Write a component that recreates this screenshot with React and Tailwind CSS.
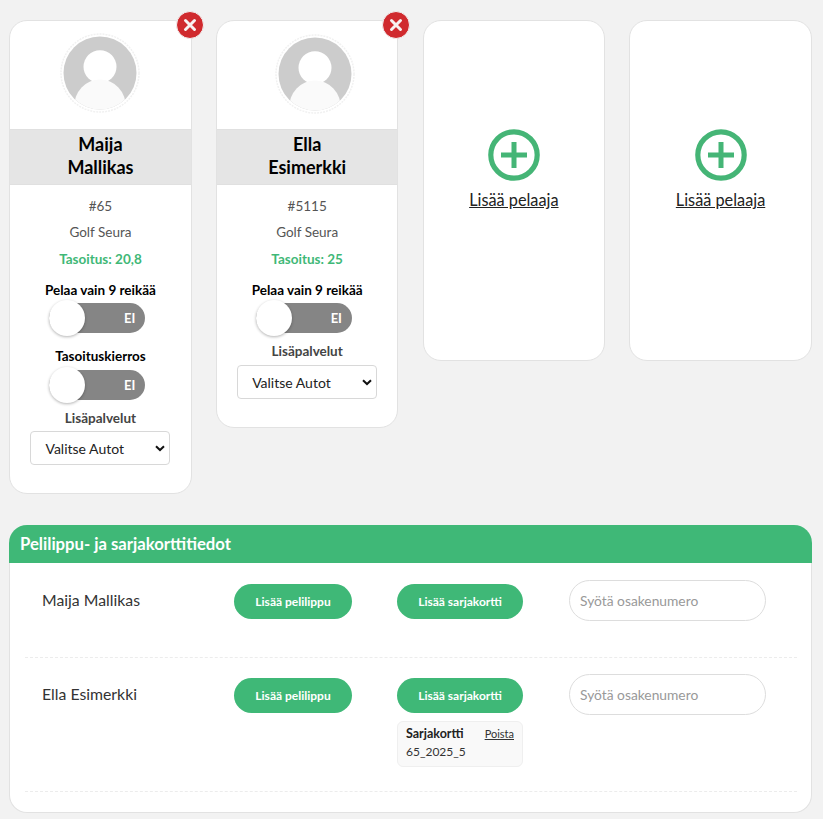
function Avatar({ id }) {
  return (
    <svg width="80" height="80" viewBox="0 0 80 80" className="block">
      <circle cx="40" cy="40" r="39" fill="#ffffff" stroke="#f1f1f1" strokeWidth="1.5" strokeDasharray="2 1" />
      <circle cx="40" cy="40" r="36.5" fill="#cccccc" />
      <clipPath id={id}>
        <circle cx="40" cy="40" r="36.5" />
      </clipPath>
      <circle cx="40" cy="33.7" r="16.5" fill="#ffffff" />
      <ellipse cx="40" cy="74" rx="26" ry="27.5" fill="#fafafa" clipPath={"url(#" + id + ")"} />
    </svg>
  );
}

function CloseBadge({ className }) {
  return (
    <span className={"absolute flex h-[28px] w-[28px] items-center justify-center rounded-full border border-[#f2f2f2] bg-[#d02a2e] " + className}>
      <svg width="14" height="14" viewBox="0 0 14 14">
        <path d="M2.5 2.5 L11.5 11.5 M11.5 2.5 L2.5 11.5" stroke="#f8f2f2" strokeWidth="3" strokeLinecap="round" />
      </svg>
    </span>
  );
}

function Toggle() {
  return (
    <div className="relative ml-[39px] h-[30px] w-[96px] rounded-full bg-[#858585]">
      <span className="absolute right-[10px] top-[6px] text-[13px] font-bold leading-[18px] text-white">EI</span>
      <span className="absolute -top-[3px] left-0 h-[36px] w-[36px] rounded-full bg-white shadow-[0_1px_3px_rgba(0,0,0,0.3)]" />
    </div>
  );
}

function Select({ className }) {
  return (
    <div className={"relative mx-auto flex h-[34px] w-[140px] items-center rounded-[4px] border border-[#d8d8d8] bg-white pl-[14px] text-[14px] text-[#222222] " + className}>
      Valitse Autot
      <svg className="absolute right-[4px] top-[13px]" width="10" height="7" viewBox="0 0 10 7">
        <path d="M1 1.2 L5 5 L9 1.2" fill="none" stroke="#111111" strokeWidth="2" />
      </svg>
    </div>
  );
}

function PlayerCard({ id, first, last, num, hcp, extra, height, closeClass, avatarClass }) {
  return (
    <div className={"relative rounded-[18px] border border-[#e2e2e2] bg-white " + height}>
      <CloseBadge className={closeClass} />
      <div className={"flex h-[108px] items-start justify-center " + avatarClass}>
        <Avatar id={id} />
      </div>
      <div className="border-y border-[#e0e0e0] bg-[#e5e5e5] pb-[5px] pt-[3px] text-center text-[18px] font-bold leading-[23px] text-black">
        {first}
        <br />
        {last}
      </div>
      <div className="pt-[11px] text-center text-[13.5px] leading-[20px] text-[#555555]">
        <p>#{num}</p>
        <p className="mt-[6px]">Golf Seura</p>
        <p className="mt-[7px] font-bold text-[#3fb877]">{hcp}</p>
      </div>
      <p className="mt-[11px] text-center text-[13.5px] font-bold leading-[20px] text-black">Pelaa vain 9 reikää</p>
      <div className="mt-[3px]">
        <Toggle />
      </div>
      {extra && (
        <>
          <p className="mt-[13px] text-center text-[13.5px] font-bold leading-[20px] text-black">Tasoituskierros</p>
          <div className="mt-[4px]">
            <Toggle />
          </div>
        </>
      )}
      <p className="mt-[8px] text-center text-[13.5px] font-bold leading-[20px] text-[#444444]">Lisäpalvelut</p>
      <Select className={extra ? "mt-[3px]" : "mt-[4px]"} />
    </div>
  );
}

function AddCard() {
  return (
    <div className="flex h-[341px] flex-col items-center rounded-[18px] border border-[#e2e2e2] bg-white pt-[108px]">
      <svg width="52" height="52" viewBox="0 0 52 52">
        <circle cx="26" cy="26" r="23.2" fill="none" stroke="#45b576" strokeWidth="5.2" />
        <path d="M26 13 V39 M13 26 H39" stroke="#45b576" strokeWidth="5" />
      </svg>
      <span className="mt-[7px] text-[16.3px] leading-[24px] text-[#222222] underline">Lisää pelaaja</span>
    </div>
  );
}

function Btn({ children, w }) {
  return (
    <div className={"flex h-[35px] items-center justify-center rounded-full bg-[#3fb877] text-[12px] font-bold text-white " + w}>
      {children}
    </div>
  );
}

function Row({ name, card, height }) {
  return (
    <div className={"ml-[15px] mr-[14px] flex border-b border-dashed border-[#ececec] pl-[17px] " + height}>
      <div className="w-[192px] pt-[24px] text-[15.8px] leading-[24px] text-[#333333]">{name}</div>
      <div className="w-[163px] pt-[20px]">
        <Btn w="w-[118px]">Lisää pelilippu</Btn>
      </div>
      <div className="w-[172px] pt-[20px]">
        <Btn w="w-[126px]">Lisää sarjakortti</Btn>
        {card && (
          <div className="mt-[8px] h-[46px] w-[126px] rounded-[6px] border border-[#efefef] bg-[#f9f9f9] px-[8px] pt-[3px] text-[12px] leading-[18px] text-[#333333]">
            <div className="flex items-center justify-between">
              <span className="text-[12.5px] font-bold text-[#222222]">Sarjakortti</span>
              <span className="text-[11px] underline">Poista</span>
            </div>
            <div>65_2025_5</div>
          </div>
        )}
      </div>
      <div className="pt-[16px]">
        <div className="flex h-[41px] w-[197px] items-center rounded-full border border-[#dddddd] bg-white pl-[10px] pt-px text-[13.8px] text-[#999999]">
          Syötä osakenumero
        </div>
      </div>
    </div>
  );
}

export default function App() {
  return (
    <div className="min-h-[819px] bg-[#f2f2f2] pl-[9px] pr-[11px] pt-[20px]" style={{ fontFamily: '"Lato", "Noto Sans", sans-serif' }}>
      <div className="grid grid-cols-4 items-start gap-[24.4px] pl-[0.3px] pr-[0.3px]">
        <PlayerCard id="av1" first="Maija" last="Mallikas" num="65" hcp="Tasoitus: 20,8" extra height="h-[474px]" closeClass="-top-[10px] -right-[13px]" avatarClass="pt-[12px]" />
        <PlayerCard id="av2" first="Ella" last="Esimerkki" num="5115" hcp="Tasoitus: 25" height="h-[408px]" closeClass="-top-[10px] -right-[13px]" avatarClass="pt-[13px] pl-[15px]" />
        <AddCard />
        <AddCard />
      </div>
      <div className="mt-[31px]">
        <div className="flex h-[38px] items-center rounded-t-[18px] bg-[#3fb877] pl-[11px] pt-px text-[16.7px] font-bold text-white">
          Pelilippu- ja sarjakorttitiedot
        </div>
        <div className="h-[250px] rounded-b-[18px] border-x border-b border-[#e2e2e2] bg-white pt-px">
          <Row name="Maija Mallikas" height="h-[94px]" />
          <Row name="Ella Esimerkki" card height="h-[134px]" />
        </div>
      </div>
    </div>
  );
}
